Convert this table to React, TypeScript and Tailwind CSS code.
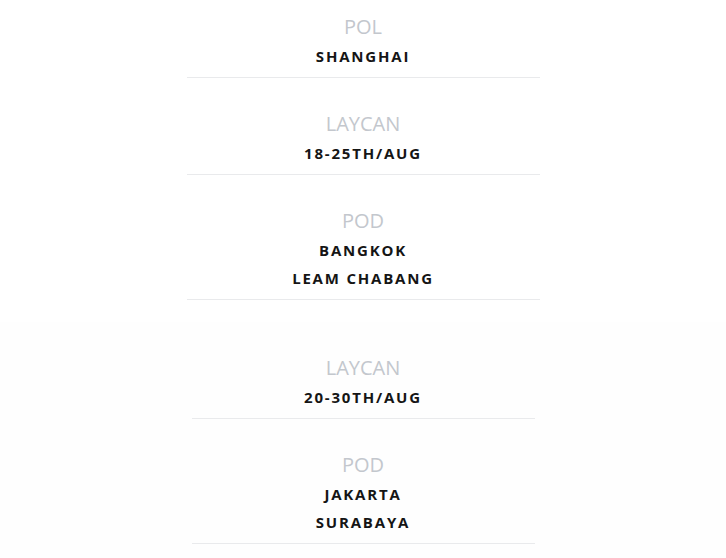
import React from "react";

type Item = { label: string; values: string[] };

const first: Item[] = [
  { label: "POL", values: ["SHANGHAI"] },
  { label: "LAYCAN", values: ["18-25TH/AUG"] },
  { label: "POD", values: ["BANGKOK", "LEAM CHABANG"] },
];

const second: Item[] = [
  { label: "LAYCAN", values: ["20-30TH/AUG"] },
  { label: "POD", values: ["JAKARTA", "SURABAYA"] },
];

function Row({ item, first }: { item: Item; first?: boolean }) {
  return (
    <div
      className={`flex flex-col items-center border-b border-[#e9eaec] pb-[7px] ${
        first ? "pt-[12px]" : "pt-[31px]"
      }`}
    >
      <div
        className="text-[20px] leading-[30px] font-normal text-[#c3c7cd]"
        style={{ fontFamily: '"Open Sans", "Noto Sans", sans-serif' }}
      >
        {item.label}
      </div>
      {item.values.map((v) => (
        <div
          key={v}
          className="text-[15px] leading-[28px] font-bold tracking-[1.8px] text-[#151515]"
          style={{ fontFamily: '"Open Sans", "Noto Sans", sans-serif' }}
        >
          {v}
        </div>
      ))}
    </div>
  );
}

export default function App() {
  return (
    <div className="w-[726px] h-[558px] overflow-hidden bg-white">
      <div className="mx-auto w-[353px]">
        {first.map((it, i) => (
          <Row key={i} item={it} first={i === 0} />
        ))}
      </div>
      <div className="mt-[22px] bg-[#fefefe] pb-4">
        <div className="mx-auto w-[343px]">
          {second.map((it, i) => (
            <Row key={i} item={it} />
          ))}
        </div>
      </div>
    </div>
  );
}
